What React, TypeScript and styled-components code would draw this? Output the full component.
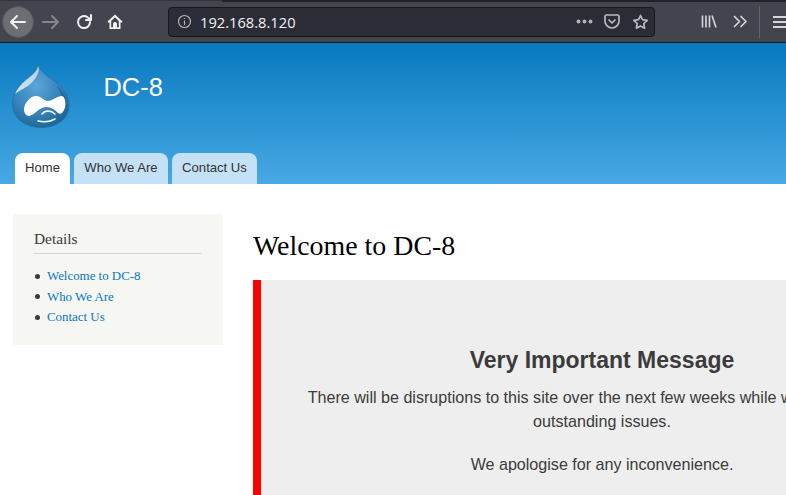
import React from "react";
import styled, { createGlobalStyle } from "styled-components";

const Global = createGlobalStyle`
  html, body { margin: 0; padding: 0; width: 786px; height: 495px; overflow: hidden; background: #fff; }
  #root { width: 786px; height: 495px; overflow: hidden; }
  * { box-sizing: border-box; }
`;

const Page = styled.div`
  width: 786px;
  height: 495px;
  overflow: hidden;
  display: flex;
  flex-direction: column;
  font-family: "Liberation Sans", Arial, sans-serif;
`;

const Toolbar = styled.div`
  flex: 0 0 43px;
  height: 43px;
  background: #42454d;
  border-top: 1px solid #33353b;
  border-bottom: 1px solid #17181c;
  display: flex;
  align-items: center;
  position: relative;
`;

const TabEdge = styled.div`
  position: absolute;
  left: 222px;
  right: 0;
  top: -1px;
  height: 2px;
  background: #202228;
`;

const BackButton = styled.div`
  flex: 0 0 32px;
  width: 32px;
  height: 32px;
  margin-left: 2px;
  border-radius: 50%;
  background: #6d6e73;
  border: 1px solid #54565c;
  display: flex;
  align-items: center;
  justify-content: center;
`;

const ToolIcon = styled.div<{ $w: number; $ml: number }>`
  flex: 0 0 ${(p) => p.$w}px;
  width: ${(p) => p.$w}px;
  margin-left: ${(p) => p.$ml}px;
  display: flex;
  align-items: center;
  justify-content: center;
`;

const UrlBar = styled.div`
  flex: 0 0 487px;
  width: 487px;
  height: 30px;
  margin-left: 45px;
  background: #2a2c36;
  border: 1px solid #17181d;
  border-radius: 4px;
  display: flex;
  align-items: center;
  padding: 0 5px 0 8px;
`;

const UrlText = styled.span`
  margin-left: 8px;
  flex: 1;
  font-family: "Open Sans", "Liberation Sans", sans-serif;
  font-size: 14.7px;
  color: #f2f2f5;
`;

const Divider = styled.div`
  flex: 0 0 1px;
  height: 32px;
  margin-left: 11px;
  background: #63656b;
`;

const Header = styled.header`
  flex: 0 0 141px;
  height: 141px;
  background: linear-gradient(#0779bf, #48a9e4);
  display: flex;
  flex-direction: column;
`;

const Brand = styled.div`
  flex: 1;
  display: flex;
  padding: 20px 0 0 12px;
`;

const SiteName = styled.div`
  margin-left: 33.500px;
  margin-top: 9px;
  font-size: 25.4px;
  line-height: 30px;
  color: #fff;
`;

const Tabs = styled.nav`
  display: flex;
  gap: 4px;
  padding-left: 15px;
`;

const Tab = styled.a<{ $active?: boolean; $w: number }>`
  width: ${(p) => p.$w}px;
  height: 31px;
  border-radius: 8px 8px 0 0;
  background: ${(p) => (p.$active ? "#fff" : "#c5e1f5")};
  color: #333;
  font-size: 13.1px;
  line-height: 29px;
  text-align: center;
`;

const Body = styled.div`
  display: flex;
  align-items: flex-start;
  width: 1000px;
  padding: 30px 0 0 13px;
`;

const Sidebar = styled.aside`
  flex: 0 0 210px;
  height: 131px;
  background: #f6f6f2;
  padding: 15px 21px 0;
  font-family: "Liberation Serif", "Times New Roman", serif;
`;

const SideTitle = styled.h2`
  margin: 0;
  padding-bottom: 5px;
  border-bottom: 1px solid #d6d6d2;
  font-size: 15.4px;
  line-height: 19px;
  font-weight: normal;
  color: #3b3b3b;
`;

const SideList = styled.ul`
  margin: 12px 0 0;
  padding: 0;
  list-style: none;
  color: #3b3b3b;
  font-size: 12.9px;
  line-height: 20.5px;
`;

const SideItem = styled.li`
  display: flex;
  align-items: center;
  gap: 7px;
  padding-left: 1px;
`;

const Bullet = styled.span`
  flex: 0 0 5px;
  width: 5px;
  height: 5px;
  border-radius: 50%;
  background: #3b3b3b;
`;

const SideLink = styled.a`
  color: #0678be;
`;

const Main = styled.main`
  flex: 0 0 690px;
  margin-left: 30px;
`;

const Title = styled.h1`
  margin: 0;
  padding-top: 15px;
  height: 66px;
  font-family: "Liberation Serif", "Times New Roman", serif;
  font-size: 27.9px;
  line-height: 34px;
  font-weight: normal;
  color: #000;
`;

const Notice = styled.section`
  border-left: 8px solid #ff0000;
  background: #eeeeee;
  height: 300px;
  padding: 64px 40px 0;
  text-align: center;
  color: #3b3b3b;
`;

const NoticeTitle = styled.h2`
  margin: 0 0 9px;
  font-size: 23px;
  line-height: 32px;
  font-weight: bold;
`;

const NoticeText = styled.p`
  margin: 0 0 19px;
  font-size: 16.1px;
  line-height: 24px;
`;

const Logo = () => (
  <svg width="58" height="66" viewBox="0 0 58 66">
    <defs>
      <radialGradient id="drop" cx="42%" cy="35%" r="70%">
        <stop offset="0" stopColor="#5ba6d8" />
        <stop offset="0.6" stopColor="#3684bb" />
        <stop offset="1" stopColor="#1c6594" />
      </radialGradient>
      <linearGradient id="gloss" x1="0.8" y1="0" x2="0.1" y2="1">
        <stop offset="0" stopColor="#c4dcec" />
        <stop offset="1" stopColor="#eef6fb" />
      </linearGradient>
    </defs>
    <path d="M26 0C27 8 34 12 41 17C51 24 57 32 57 42C57 56 45 64.500 29 64.500C13 64.500 0.500 55 0.500 41C0.500 30 7 23 15 17C20 13 25 8 26 0Z" fill="url(#drop)" stroke="#2a6f9e" strokeWidth="0.8" />
    <path d="M26 3C26 8 20 12 14 17C9 21 5 26 3 31C9 26 17 24 22 17C26 12 28 7 26 3Z" fill="url(#gloss)" opacity="0.85" />
    <path d="M44 22C51 28 55 35 54 44C52 36 49 30 44 22Z" fill="#17618f" opacity="0.7" />
    <path d="M12 46C12 41 18 33 24 33C29 33 32 38 36 38C40 38 45 33 50 33C53 34 54 40 53 44C52 49 49 52 46 50C43 47 39 44 34 44C27 44 22 53 17 53C14 53 12 50 12 46Z" fill="#fff" />
    <path d="M30 51C33 47 39 47 43 51" fill="none" stroke="#fff" strokeWidth="1.6" strokeLinecap="round" />
    <path d="M26 58C31 59 38 59 43 56" fill="none" stroke="#fff" strokeWidth="1.6" strokeLinecap="round" />
  </svg>
);

export default function App() {
  const stroke = { fill: "none", strokeLinecap: "round" as const, strokeLinejoin: "round" as const };
  return (
    <Page>
      <Global />
      <Toolbar>
        <TabEdge />
        <BackButton>
          <svg width="18" height="16" viewBox="0 0 18 16" {...stroke} stroke="#f1f1f2" strokeWidth="2">
            <path d="M2 8H16M8 2L2 8L8 14" />
          </svg>
        </BackButton>
        <ToolIcon $w={18} $ml={8}>
          <svg width="18" height="16" viewBox="0 0 18 16" {...stroke} stroke="#85868b" strokeWidth="2">
            <path d="M1 8H16M10 2L16 8L10 14" />
          </svg>
        </ToolIcon>
        <ToolIcon $w={16} $ml={16}>
          <svg width="16" height="16" viewBox="0 0 16 16" {...stroke} stroke="#f1f1f2" strokeWidth="2">
            <path d="M14 8A6 6 0 1 1 11.500 3.200L14.500 5.500" />
            <path d="M15 1V6H10" />
          </svg>
        </ToolIcon>
        <ToolIcon $w={16} $ml={15}>
          <svg width="16" height="16" viewBox="0 0 16 16">
            <path fillRule="evenodd" d="M8 0.500L0.500 7.500L1.800 8.900L2.500 8.300V15H13.500V8.300L14.200 8.900L15.500 7.500ZM8 3.300L11.800 6.900V13.300H10V10A2 2 0 0 0 6 10V13.300H4.200V6.900Z" fill="#f1f1f2" />
          </svg>
        </ToolIcon>
        <UrlBar>
          <svg width="15" height="15" viewBox="0 0 15 15" fill="none" stroke="#b1b1b5" strokeWidth="1.2">
            <circle cx="7.500" cy="7.500" r="6" />
            <path d="M7.500 6.500V11M7.500 4V5" />
          </svg>
          <UrlText>192.168.8.120</UrlText>
          <svg width="17" height="5" viewBox="0 0 17 5" fill="#b1b1b5">
            <circle cx="2.500" cy="2.500" r="2" />
            <circle cx="8.500" cy="2.500" r="2" />
            <circle cx="14.500" cy="2.500" r="2" />
          </svg>
          <ToolIcon $w={16} $ml={11}>
            <svg width="16" height="15" viewBox="0 0 16 15" {...stroke} stroke="#b9b9bd" strokeWidth="1.7">
              <path d="M2.500 1H13.500A1.500 1.500 0 0 1 15 2.500V7A7 7 0 0 1 1 7V2.500A1.500 1.500 0 0 1 2.500 1Z" />
              <path d="M5 6L8 9L11 6" />
            </svg>
          </ToolIcon>
          <ToolIcon $w={17} $ml={12}>
            <svg width="17" height="16" viewBox="0 0 17 16" {...stroke} stroke="#b9b9bd" strokeWidth="1.7">
              <path d="M8.500 1.500L10.500 5.700L15.200 6.300L11.800 9.500L12.600 14.200L8.500 11.900L4.400 14.200L5.200 9.500L1.800 6.300L6.500 5.700Z" />
            </svg>
          </ToolIcon>
        </UrlBar>
        <ToolIcon $w={16} $ml={46}>
          <svg width="16" height="15" viewBox="0 0 16 15" {...stroke} stroke="#d6d6d8" strokeWidth="1.6">
            <path d="M1.500 1.500V13.500M5 1.500V13.500M8.500 1.500V13.500M11 1.500L15 13.500" strokeLinecap="butt" />
          </svg>
        </ToolIcon>
        <ToolIcon $w={15} $ml={16}>
          <svg width="15" height="13" viewBox="0 0 15 13" {...stroke} stroke="#d6d6d8" strokeWidth="1.7">
            <path d="M1.500 1.500L6.500 6.500L1.500 11.500M8 1.500L13 6.500L8 11.500" />
          </svg>
        </ToolIcon>
        <Divider />
        <ToolIcon $w={14} $ml={13}>
          <svg width="14" height="12" viewBox="0 0 14 12" stroke="#d6d6d8" strokeWidth="2">
            <path d="M0 1H14M0 6H14M0 11H14" />
          </svg>
        </ToolIcon>
      </Toolbar>
      <Header>
        <Brand>
          <Logo />
          <SiteName>DC-8</SiteName>
        </Brand>
        <Tabs>
          <Tab $active $w={55}>Home</Tab>
          <Tab $w={94}>Who We Are</Tab>
          <Tab $w={85}>Contact Us</Tab>
        </Tabs>
      </Header>
      <Body>
        <Sidebar>
          <SideTitle>Details</SideTitle>
          <SideList>
            <SideItem><Bullet /><SideLink>Welcome to DC-8</SideLink></SideItem>
            <SideItem><Bullet /><SideLink>Who We Are</SideLink></SideItem>
            <SideItem><Bullet /><SideLink>Contact Us</SideLink></SideItem>
          </SideList>
        </Sidebar>
        <Main>
          <Title>Welcome to DC-8</Title>
          <Notice>
            <NoticeTitle>Very Important Message</NoticeTitle>
            <NoticeText>
              There will be disruptions to this site over the next few weeks while we review some outstanding issues.
            </NoticeText>
            <NoticeText>We apologise for any inconvenience.</NoticeText>
          </Notice>
        </Main>
      </Body>
    </Page>
  );
}
